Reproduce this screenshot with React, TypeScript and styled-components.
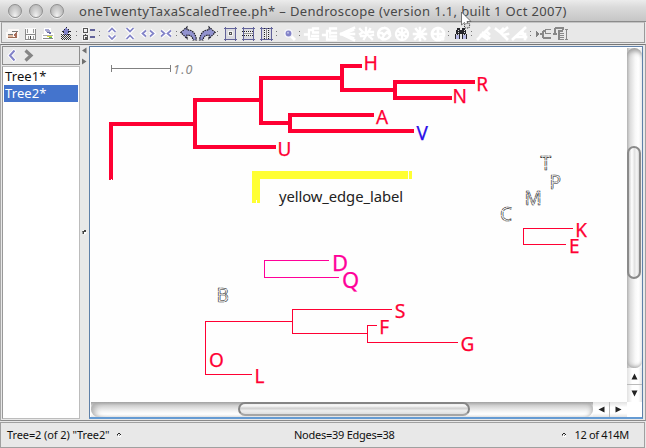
import React from "react";
import styled, { createGlobalStyle, css } from "styled-components";

const GlobalStyle = createGlobalStyle`
  html, body { margin: 0; padding: 0; }
  body { width: 646px; height: 448px; overflow: hidden; background: #e8e8e8; }
  * { box-sizing: border-box; }
`;

const Window = styled.div`
  position: relative;
  width: 646px;
  height: 448px;
  display: flex;
  flex-direction: column;
  background: #e8e8e8;
  font-family: "Noto Sans", "Open Sans", sans-serif;
  color: #1c1c1c;
`;

const TitleBar = styled.header`
  height: 22px;
  flex: none;
  display: flex;
  align-items: center;
  padding-left: 8px;
  background: linear-gradient(#ececec 0, #dadada 35%, #c6c6c6 100%);
  border-bottom: 1px solid #8c8c8c;
`;

const Lights = styled.div`
  display: flex;
  gap: 7px;
`;

const Light = styled.span`
  width: 14px;
  height: 14px;
  border-radius: 50%;
  border: 1px solid #909090;
  background: radial-gradient(ellipse at 50% 95%, #f4f4f4 0, #d0d0d0 45%, #a9a9a9 100%);
  box-shadow: 0 1px 0 #eee;
`;

const Title = styled.h1`
  margin: 0 0 0 15px;
  font-size: 13px;
  line-height: 20px;
  font-weight: 400;
  letter-spacing: 0.35px;
  white-space: pre;
  color: #484848;
`;

const Toolbar = styled.div`
  height: 21px;
  flex: none;
  margin: 0 1px;
  display: flex;
  align-items: flex-start;
  padding: 1px 0 0 1px;
  border: 1px solid #9a9a9a;
  border-top-color: #c4c4c4;
  background: #e8e8e8;
`;

const IconCell = styled.svg`
  width: 18px;
  height: 18px;
  flex: none;
  display: block;
`;

const Separator = styled.span`
  width: 5px;
  height: 14px;
  flex: none;
  padding: 7px 0 0 1px;
  &::before {
    content: "";
    display: block;
    width: 1px;
    height: 5px;
    background: linear-gradient(#777 1px, transparent 1px 4px, #777 4px);
  }
`;

const Main = styled.main`
  height: 377px;
  margin-top: 1px;
  flex: none;
  display: flex;
  border-top: 1px solid #777;
  border-left: 1px solid #a8a8a8;
  border-right: 1px solid #a0a0a0;
  border-bottom: 1px solid #8a8a8a;
  padding: 1px 2px 1px 1px;
`;

const Side = styled.aside`
  width: 78px;
  flex: none;
  display: flex;
  flex-direction: column;
  gap: 1px;
`;

const Nav = styled.div`
  height: 19px;
  flex: none;
  border: 1px solid #8e8e8e;
  display: flex;
`;

const TreeList = styled.ul`
  list-style: none;
  margin: 0;
  padding: 1px;
  flex: 1;
  border: 1px solid #bcbcbc;
  border-left-color: #999;
  background: #fff;
`;

const TreeItem = styled.li<{ $selected?: boolean }>`
  height: 17px;
  line-height: 17px;
  padding-left: 1px;
  font-size: 13px;
  letter-spacing: 0.1px;
  color: #111;
  ${(p) =>
    p.$selected &&
    css`
      background: #4474cd;
      color: #fff;
    `}
`;

const Divider = styled.div`
  width: 9px;
  flex: none;
  background: #e8e8e8;
`;

const View = styled.section`
  flex: 1;
  display: grid;
  grid-template-columns: 537px 15px;
  grid-template-rows: 355px 15px;
  border: 1px solid #5f80a8;
  border-bottom-width: 2px;
  border-bottom-color: #659bd3;
  background: #fff;
`;

const Drawing = styled.svg`
  display: block;
  width: 537px;
  height: 355px;
  background: #fefefe;
`;

const VTrack = styled.div`
  display: flex;
  flex-direction: column;
  margin-top: 1px;
  background: linear-gradient(90deg, #b4b4b4 0, #dcdcdc 20%, #f8f8f8 55%, #fff 75%, #ededed 100%);
`;

const VWell = styled.div`
  height: 320px;
  flex: none;
  padding: 98px 0 0 0;
  border-radius: 8px 8px 7px 7px;
  box-shadow: inset 0 7px 5px -4px #999, inset 0 -5px 4px -4px #999;
`;

const VThumb = styled.div`
  height: 133px;
  width: 14px;
  border: 2px solid #8a8a8a;
  border-radius: 7px;
  background: linear-gradient(90deg, #ccc, #fff 28%, #e2e2e2 55%, #f6f6f6 80%, #d4d4d4);
`;

const HTrack = styled.div`
  display: flex;
  margin-left: 1px;
  background: linear-gradient(#a2a2a2 0, #d2d2d2 25%, #f3f3f3 60%, #fff 80%, #e8e8e8 100%);
`;

const HWell = styled.div`
  width: 502px;
  flex: none;
  padding-left: 147px;
  border-radius: 8px;
  box-shadow: inset 8px 0 6px -5px #aaa, inset -5px 0 5px -4px #aaa;
`;

const HThumb = styled.div`
  width: 232px;
  height: 14px;
  border: 2px solid #858585;
  border-radius: 7px;
  border-bottom-color: #a5a5a5;
  background: linear-gradient(#eee, #f7f7f7 20%, #cfcfcf 42%, #eee 68%, #ddd);
`;

const ArrowCell = styled.svg<{ $vertical?: boolean }>`
  flex: none;
  display: block;
  width: ${(p) => (p.$vertical ? 15 : 17)}px;
  height: ${(p) => (p.$vertical ? 17 : 15)}px;
  background: linear-gradient(${(p) => (p.$vertical ? "90deg" : "180deg")}, #e2e2e2, #fff 35%, #fff 75%, #e4e4e4);
`;

const StatusBar = styled.footer`
  height: 26px;
  flex: none;
  display: grid;
  grid-template-columns: 287px 200px 1fr;
  align-items: center;
  padding: 0 15px 0 6px;
  margin: 1px 1px 0 0;
  border: 1px solid #a0a0a0;
  font-size: 11px;
  color: #111;
`;

const StatusText = styled.span<{ $end?: boolean; $spacing: number }>`
  display: flex;
  align-items: center;
  justify-content: ${(p) => (p.$end ? "flex-end" : "flex-start")};
  gap: 7px;
  line-height: 16px;
  letter-spacing: ${(p) => p.$spacing}px;
  white-space: pre;
`;

const Pointer = styled.svg`
  position: absolute;
  left: 460px;
  top: 11px;
  width: 13px;
  height: 20px;
`;

const P = "#8283c8";
const N = "#62639a";

const Glyph = ({ children, smooth }: { children: React.ReactNode; smooth?: boolean }) => (
  <IconCell viewBox="0 0 18 18" fill="none" shapeRendering={smooth ? "auto" : "crispEdges"}>
    {children}
  </IconCell>
);

const Chevrons = ({ d }: { d: string }) => (
  <Glyph smooth>
    <path d={d} stroke="#fff" strokeWidth="4" />
    <path d={d} stroke={P} strokeWidth="1.7" />
  </Glyph>
);

const UndoShape = () => (
  <path
    d="M0.800 8.500L7 3V6C12 5.500 15.500 9 16.500 16H13C12.500 12.500 10.500 11 7 11V14.500Z"
    fill="#9293cf"
    stroke="#181822"
    strokeWidth="1.200"
    strokeDasharray="1.500 .9"
  />
);

const Frame = ({ children }: { children: React.ReactNode }) => (
  <Glyph>
    <rect x="4" y="4" width="11" height="12" fill="#dadae0" />
    <path d="M3 4.500H16M3 15.500H16M4.500 3V17M14.500 3V17" stroke={N} />
    {children}
  </Glyph>
);

const White = ({ d, w = 1.8 }: { d: string; w?: number }) => (
  <Glyph smooth>
    <path d={d} stroke="#fff" strokeWidth={w} strokeLinecap="square" />
  </Glyph>
);

const Spark = () => (
  <svg width="6" height="6" viewBox="0 0 6 6" shapeRendering="crispEdges">
    <path d="M2 1H4V2H2ZM4 2H5V3H4ZM1 2H2V3H1Z" fill="#222" />
    <path d="M1 3H2V4H1ZM3 3H4V4H3Z" fill="#888" />
    <path d="M2 3H3V5H2ZM4 3H5V5H3V4H4Z" fill="#fff" />
  </svg>
);

const DividerMarks = () => (
  <svg width="9" height="374" viewBox="80 46 9 374">
    <path d="M86.500 47.500V53.500L82 50.500Z M82 58.500V64.500L86.500 61.500Z" fill="#707070" />
    <circle cx="84.300" cy="232.300" r="2.300" fill="#fff" />
    <path d="M82 231H84V230H86V232H84V234H82.500V232Z" fill="#444" />
  </svg>
);

const IconStrip = () => (
  <>
    <Glyph>
      <path d="M5 5H16V14H15V15H4V14H3V8H5Z" fill="#fbf8f6" />
      <path d="M5 13H14V14H5Z" fill="#9b6b55" />
      <path d="M5 11H10V13H5Z" fill="#e0b79c" />
      <path d="M5 10H10V11H5ZM9 7H15V8H9Z" fill="#777" />
      <path d="M13 8H14V13H12V12H11V10H12V9H13Z" fill="#a86d5a" />
    </Glyph>
    <Glyph>
      <path d="M4 4H15V17H4Z" fill="#fafafa" />
      <path d="M4.500 5V16M14.500 5V16M5 10.500H14M4 15.500H15" stroke="#8a8a8a" />
      <path d="M6.500 5V9M12.500 5V9M7.500 12V15M12 12V15" stroke="#999" />
      <path d="M9 12H10V15H9Z" fill="#444" />
    </Glyph>
    <Glyph>
      <path d="M5 4H12V9H15V16H3V10H5Z" fill="#fff" />
      <path d="M6 5H10V6H11V8H7V7H6Z" fill="#a9aad0" />
      <path d="M8 8H12V10H10V9H8Z" fill="#6c6fa8" />
      <path d="M4 11H14V12H4Z" fill="#aaa" />
      <path d="M4 14H14V15H4Z" fill="#888" />
      <path d="M8 12H13V13H8Z" fill="#dddb38" />
      <path d="M10 13H13V14H10Z" fill="#58bd59" />
    </Glyph>
    <Glyph>
      <path d="M8 4H10V5H11V6H12V7H13V8H11V11H7V8H5V7H6V6H7V5H8Z" fill={P} />
      <path d="M8.500 3.500H9.500M6.500 5.500H7.500M10.500 5.500H11.500M4.500 7.500H7M11 7.500H13.500" stroke="#20202c" />
      <path d="M6.500 8V12M11.500 8V12" stroke="#20202c" strokeDasharray="1 1" />
      <path d="M4 10.500H14M4 12.500H14M4 14.500H14" stroke="#333" strokeDasharray="1 1" />
      <path d="M5 11.500H14M5 13.500H14M5 15.500H14" stroke="#333" strokeDasharray="1 1" />
    </Glyph>
    <Separator />
    <Glyph>
      <path d="M2 3H9V10H2ZM2 11H9V17H2Z" fill="#f4f4f4" />
      <path d="M3.500 4.500H7.500V8.500H3.500Z" stroke="#555" />
      <path d="M3.500 11.500H7.500V15.500H3.500Z" stroke="#555" />
      <path d="M5 10V11M5 13H6V14H5Z" stroke="#555" />
      <path d="M10 6H15M10 13H15" stroke={N} strokeWidth="2" />
    </Glyph>
    <Separator />
    <Chevrons d="M5.500 8L9 4.500L12.500 8M5.500 11.500L9 15L12.500 11.500" />
    <Chevrons d="M5.500 4L9 7.500L12.500 4M5.500 15L9 11.500L12.500 15" />
    <Chevrons d="M7 6.500L3.500 9.500L7 12.500M11 6.500L14.500 9.500L11 12.500" />
    <Chevrons d="M4 6.500L7.500 9.500L4 12.500M14 6.500L10.500 9.500L14 12.500" />
    <Separator />
    <Glyph smooth><UndoShape /></Glyph>
    <Glyph smooth><g transform="translate(18 0) scale(-1 1)"><UndoShape /></g></Glyph>
    <Separator />
    <Frame><path d="M7 7H12V12H7Z" fill="#f2f2f2" /><path d="M8 8H11V11H8Z" fill="#555" /><path d="M9 9H10V10H9Z" fill="#eee" /></Frame>
    <Frame><path d="M5 7H14V12H5Z" fill="#eee" /><path d="M3 7.500H15M3 11.500H15" stroke="#222" strokeDasharray="1 1" /><path d="M5 9.500H14" stroke="#999" /></Frame>
    <Frame><path d="M7 5H12V15H7Z" fill="#eee" /><path d="M7.500 4V16M11.500 4V16" stroke="#222" strokeDasharray="1 1" /><path d="M9.500 5V15" stroke="#888" /></Frame>
    <Separator />
    <Glyph smooth>
      <path d="M11 12L15 16" stroke="#fff" strokeWidth="3" />
      <circle cx="8.500" cy="9.500" r="4.500" fill="#f3f3f8" />
      <circle cx="8.500" cy="9.500" r="2.900" fill={P} />
      <circle cx="8" cy="8.700" r="1" fill="#c3c4e8" />
    </Glyph>
    <Separator />
    <White w={2.300} d="M2 10.500H6M6 6V15M6 6H10M6 15H15M10 4.500V8.500M10 4.500H15M10 8.500H15M9 12H15" />
    <White w={2.300} d="M2 11H6M6 7V15.500M6 7H9M6 15.500H15M9 4.500V9.500M9 4.500H15M9 9H15M9 12.500H15" />
    <White w={2.500} d="M2 10L15 4M2 10L15 16M8 10H15M6 9L14 6M6 11L14 14" />
    <White w={2.300} d="M3 5L6 8L3 10M6 8L10 10L13 5M11 8H16M10 10L7 15M8 12H4M10 10L15 15M12 12L16 11M9 4V7" />
    <White w={2.500} d="M9 4A6 6 0 0 0 4 13M6 14A6 6 0 0 0 15 12M15 10A6 6 0 0 0 10 4M4 9H7L9 11L7 15M9 11L12 8L14 10" />
    <White w={2.200} d="M9 4A6 6 0 1 0 9.010 4M9 10V5M9 10L5 7M9 10L4 12M9 10V16M9 10L14 13M9 10L14 7" />
    <White w={2.500} d="M9 10V4M9 10L5 5M9 10H3M9 10L4 15M9 10V16M9 10L14 15M9 10H15M9 10L14 5" />
    <White w={2.700} d="M9 4A6 6 0 1 0 9.010 4M9 8V4M8 10H4M9 12V16M10 10H14M12 13L14 15" />
    <Separator />
    <Glyph>
      <path d="M5 4H8V6H10V4H13V6H14V10H15V15H10V10H8V15H3V10H4V6H5Z" fill="#25252a" />
      <path d="M4 11H7V15H4ZM11 11H14V15H11Z" fill="#b8bae7" />
      <path d="M6 6V9M12 6V9M8 12H10M4 10H7M11 10H14" stroke="#ddd" strokeDasharray="1 1" />
    </Glyph>
    <Separator />
    <White w={2.700} d="M3 15L9 9L14 4M6 11L12 15M8 9L14 14M11 7L14 10" />
    <White w={2.700} d="M3 5L8 9L14 15M8 9L14 4M10 11L15 10M7 8L10 5" />
    <White w={2.700} d="M2 15L14 4M5 13H15M8 10H14V15M11 7L14 14" />
    <Separator />
    <Glyph>
      <path d="M2 7L6 10L2 13Z" fill="#808080" />
      <path d="M6 10H8M9 7V14M9 7H11M9 14H17M11.500 5V10M11 5.500H17M11 9.500H17" stroke="#888" strokeWidth="1.600" />
    </Glyph>
    <Glyph>
      <path d="M1 10H5M3 4V10M3 4H11V6M6 7H11M7 7V16M7 9.500H12M7 11.500H12M7 13.500H12M7 15.500H12M14.500 5V16M13 5.500H16M13 15.500H16" stroke="#888" strokeWidth="1.400" />
    </Glyph>
  </>
);

const RED = "#ff0033";

const heavyEdges = [
  "M111 180V124H195", "M276 147H195V100H261", "M290 123H261V78H342",
  "M362 66H342V90H395", "M475 82H395V98H452", "M374 115H290V131H414",
];
const thinEdges = [
  "M573 228.500H523.500V244.500H566",
  "M292 321.500H205.500V374.500H252",
  "M392 309.500H292.500V333.500H367",
  "M377 325.500H367.500V342.500H458",
];

type Taxon = [string, number, number, number, string];
const taxa: Taxon[] = [
  ["H", 363.5, 70, 19.5, RED], ["R", 476.3, 91, 19, RED], ["N", 452.5, 103, 19, RED],
  ["A", 376, 124, 19, RED], ["V", 416.5, 140, 19, "#2b0fe8"], ["U", 277.5, 156, 19, RED],
  ["K", 575.3, 237, 19, RED], ["E", 569, 253, 19, RED],
  ["D", 332, 271, 22, "#ff0099"], ["Q", 342, 288, 22, "#ff0099"],
  ["S", 394.8, 318, 19.5, RED], ["F", 379.3, 334, 19, RED], ["G", 460.5, 351, 19, RED],
  ["O", 209, 367, 19, RED], ["L", 254.5, 383, 19, RED],
];
const ghosts: [string, number, number][] = [
  ["T", 540.5, 170], ["P", 549.5, 189], ["M", 524.5, 205], ["C", 500, 221], ["B", 216.5, 302],
];

const Dendrogram = () => (
  <Drawing viewBox="90 47 537 355" fontFamily="Noto Sans, sans-serif" fill="none">
    <g shapeRendering="crispEdges">
      <path d="M111.500 65V72M170.500 65V72M111 68.500H171" stroke="#808080" />
      <path d={heavyEdges.join("")} stroke={RED} strokeWidth="4" strokeLinejoin="miter" />
      <path d={thinEdges.join("")} stroke={RED} />
      <path d="M329 260.500H264.500V277.500H339" stroke="#ff0099" />
      <path d="M256 203V175H408M409 175H412" stroke="#ffff33" strokeWidth="8" />
      <path d="M256.500 200V204M111.500 179V181" stroke="#fff" />
    </g>
    <text x="173" y="74" fontSize="12.500" fontStyle="italic" fill="#888" textLength="19.500">1.0</text>
    {taxa.map(([name, x, y, size, color]) => (
      <text key={name} x={x} y={y} fontSize={size} fill={color} stroke={color} strokeWidth="0.250">{name}</text>
    ))}
    {ghosts.map(([name, x, y]) => (
      <text key={name} x={x} y={y} fontSize="19" fill="#fff" stroke="#222" strokeWidth="0.600" strokeDasharray="5 .6">{name}</text>
    ))}
    <text x="279" y="202" fontSize="14.800" fill="#222" textLength="124">yellow_edge_label</text>
  </Drawing>
);

export default function App() {
  return (
    <>
      <GlobalStyle />
      <Window>
        <TitleBar>
          <Lights><Light /><Light /><Light /></Lights>
          <Title>oneTwentyTaxaScaledTree.ph* – Dendroscope (version 1.1, built 1 Oct 2007)</Title>
        </TitleBar>
        <Toolbar><IconStrip /></Toolbar>
        <Main>
          <Side>
            <Nav>
              <svg width="76" height="17" viewBox="3 47 76 17" fill="none">
                <path d="M15 50L10 55.500L15 61" stroke="#fff" strokeWidth="4" />
                <path d="M14.500 50.500L10 55.500L14.500 60.500" stroke={P} strokeWidth="2" />
                <path d="M25.500 50.500L31 55.500L25.500 60.500" stroke="#858585" strokeWidth="3.200" />
              </svg>
            </Nav>
            <TreeList>
              <TreeItem>Tree1*</TreeItem>
              <TreeItem $selected>Tree2*</TreeItem>
            </TreeList>
          </Side>
          <Divider><DividerMarks /></Divider>
          <View>
            <Dendrogram />
            <VTrack>
              <VWell><VThumb /></VWell>
              <ArrowCell $vertical viewBox="0 0 15 17"><path d="M7.500 5.500L10.500 11.500H4.500Z" fill="#222" /><path d="M0 16.500H15" stroke="#bbb" /></ArrowCell>
              <ArrowCell $vertical viewBox="0 0 15 17"><path d="M7.500 11.500L10.500 5.500H4.500Z" fill="#222" /></ArrowCell>
            </VTrack>
            <HTrack>
              <HWell><HThumb /></HWell>
              <ArrowCell viewBox="0 0 17 15"><path d="M5.500 7.500L11.500 4.500V10.500Z" fill="#222" /><path d="M16.500 0V15" stroke="#bbb" /></ArrowCell>
              <ArrowCell viewBox="0 0 17 15"><path d="M11.500 7.500L5.500 4.500V10.500Z" fill="#222" /></ArrowCell>
            </HTrack>
          </View>
        </Main>
        <StatusBar>
          <StatusText $spacing={-0.1}>Tree=2 (of 2) "Tree2"<Spark /></StatusText>
          <StatusText $spacing={-0.26}>Nodes=39 Edges=38</StatusText>
          <StatusText $end $spacing={-0.3}><Spark />12 of 414M</StatusText>
        </StatusBar>
        <Pointer viewBox="460 11 13 20">
          <path d="M461.500 12V25L464.500 22.500L466.500 27L469 26L467 21.500H471Z" fill="#fff" stroke="#555" strokeWidth=".8" />
          <path d="M464 25L467 23L470 24L469 28L465 28Z" fill="#ddd" stroke="#333" strokeDasharray="1 1" />
        </Pointer>
      </Window>
    </>
  );
}
